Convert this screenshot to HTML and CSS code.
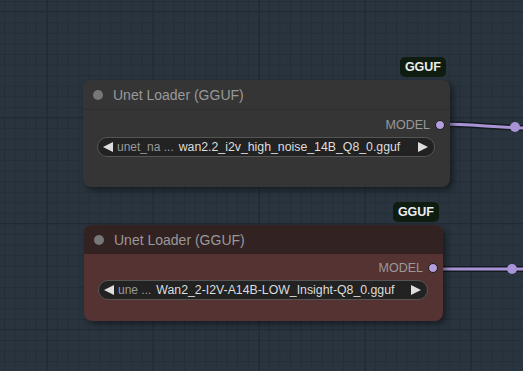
FILE: index.html
```html
<!DOCTYPE html>
<html lang="en">
<head>
    <meta charset="UTF-8">
    <title>Graph</title>
    <link rel="stylesheet" href="styles.css">
</head>
<body>
    <div class="canvas">
        <!-- links between nodes -->
        <svg class="links" width="523" height="371">
            <path d="M440 124 C470 124, 490 127, 523 128" class="link-shadow"/>
            <path d="M440 124 C470 124, 490 127, 523 128" class="link"/>
            <circle cx="515" cy="127" r="5" class="link-dot"/>
            <path d="M434 269 L523 269" class="link-shadow"/>
            <path d="M434 269 L523 269" class="link"/>
            <circle cx="512" cy="269" r="5" class="link-dot"/>
        </svg>

        <div class="node node-a">
            <div class="badge">GGUF</div>
            <div class="node-title"><span class="dot"></span>Unet Loader (GGUF)</div>
            <div class="node-body">
                <div class="output">MODEL <span class="slot"></span></div>
                <div class="widget">
                    <svg class="arrow" width="10" height="10" viewBox="0 0 10 10"><path d="M0 5 L10 0 L10 10 Z"/></svg>
                    <span class="w-label">unet_na ...</span>
                    <span class="w-value">wan2.2_i2v_high_noise_14B_Q8_0.gguf</span>
                    <svg class="arrow right" width="10" height="10" viewBox="0 0 10 10"><path d="M0 0 L10 5 L0 10 Z"/></svg>
                </div>
            </div>
        </div>

        <div class="node node-b red">
            <div class="badge">GGUF</div>
            <div class="node-title"><span class="dot"></span>Unet Loader (GGUF)</div>
            <div class="node-body">
                <div class="output">MODEL <span class="slot"></span></div>
                <div class="widget">
                    <svg class="arrow" width="10" height="10" viewBox="0 0 10 10"><path d="M0 5 L10 0 L10 10 Z"/></svg>
                    <span class="w-label">une ...</span>
                    <span class="w-value">Wan2_2-I2V-A14B-LOW_Insight-Q8_0.gguf</span>
                    <svg class="arrow right" width="10" height="10" viewBox="0 0 10 10"><path d="M0 0 L10 5 L0 10 Z"/></svg>
                </div>
            </div>
        </div>
    </div>
</body>
</html>
```

FILE: styles.css
```css
body {
    margin: 0;
    font-family: 'Liberation Sans', Arial, sans-serif;
    background-color: #29343e;
}
.canvas {
    position: relative;
    width: 523px;
    height: 371px;
    overflow: hidden;
    background-color: #29343e;
    background-image:
        linear-gradient(#212b34 1px, transparent 1px),
        linear-gradient(90deg, #212b34 1px, transparent 1px),
        linear-gradient(#242e38 1px, transparent 1px),
        linear-gradient(90deg, #242e38 1px, transparent 1px);
    background-size: 106px 106px, 106px 106px, 10.6px 10.6px, 10.6px 10.6px;
    background-position: 0 11px, 47px 0, 0 1px, 4px 0;
}
.links {
    position: absolute;
    left: 0;
    top: 0;
}
.link-shadow {
    fill: none;
    stroke: #141a1f;
    stroke-width: 6;
}
.link {
    fill: none;
    stroke: #a893d6;
    stroke-width: 3;
}
.link-dot {
    fill: #a893d6;
}
.node {
    position: absolute;
    background-color: #353535;
    border-radius: 8px;
    box-shadow: 3px 3px 6px rgba(0, 0, 0, 0.45);
    color: #999;
}
.node-a {
    left: 83px;
    top: 80px;
    width: 367px;
    height: 107px;
}
.node-b {
    left: 84px;
    top: 225px;
    width: 359px;
    height: 96px;
}
.badge {
    position: absolute;
    right: 4px;
    top: -23px;
    height: 20px;
    line-height: 20px;
    padding: 0 5px;
    background-color: #0f1d10;
    color: #eee;
    font-weight: bold;
    font-size: 12.5px;
    border-radius: 5px;
}
.node-title {
    display: flex;
    align-items: center;
    height: 29px;
    padding-left: 10px;
    font-size: 14px;
    color: #999;
    border-bottom: 1px solid #2e2e2e;
    border-radius: 8px 8px 0 0;
}
.dot {
    width: 10px;
    height: 10px;
    border-radius: 50%;
    background-color: #777;
    margin-right: 10px;
}
.node-body {
    padding: 8px 10px 0 14px;
}
.output {
    display: flex;
    justify-content: flex-end;
    align-items: center;
    gap: 5px;
    font-size: 12.5px;
    color: #999;
    height: 14px;
    margin-right: -5px;
}
.slot {
    width: 8px;
    height: 8px;
    border-radius: 50%;
    background-color: #b39ddb;
    border: 1px solid #1a1a1a;
}
.widget {
    display: flex;
    align-items: center;
    height: 18px;
    margin-top: 5px;
    margin-right: 5px;
    border: 1px solid #555;
    border-radius: 10px;
    background-color: #222;
    font-size: 12.3px;
    padding: 0 6px 0 5px;
}
.arrow {
    fill: #ddd;
}
.arrow.right {
    margin-left: auto;
}
.w-label {
    color: #999;
    font-size: 12px;
    margin-left: 4px;
    margin-right: 5px;
}
.w-value {
    color: #ddd;
}
.red {
    background-color: #553333;
}
.red .node-title {
    background-color: #332222;
    border-bottom: none;
}
.red .node-body {
    padding-top: 7px;
}
```
